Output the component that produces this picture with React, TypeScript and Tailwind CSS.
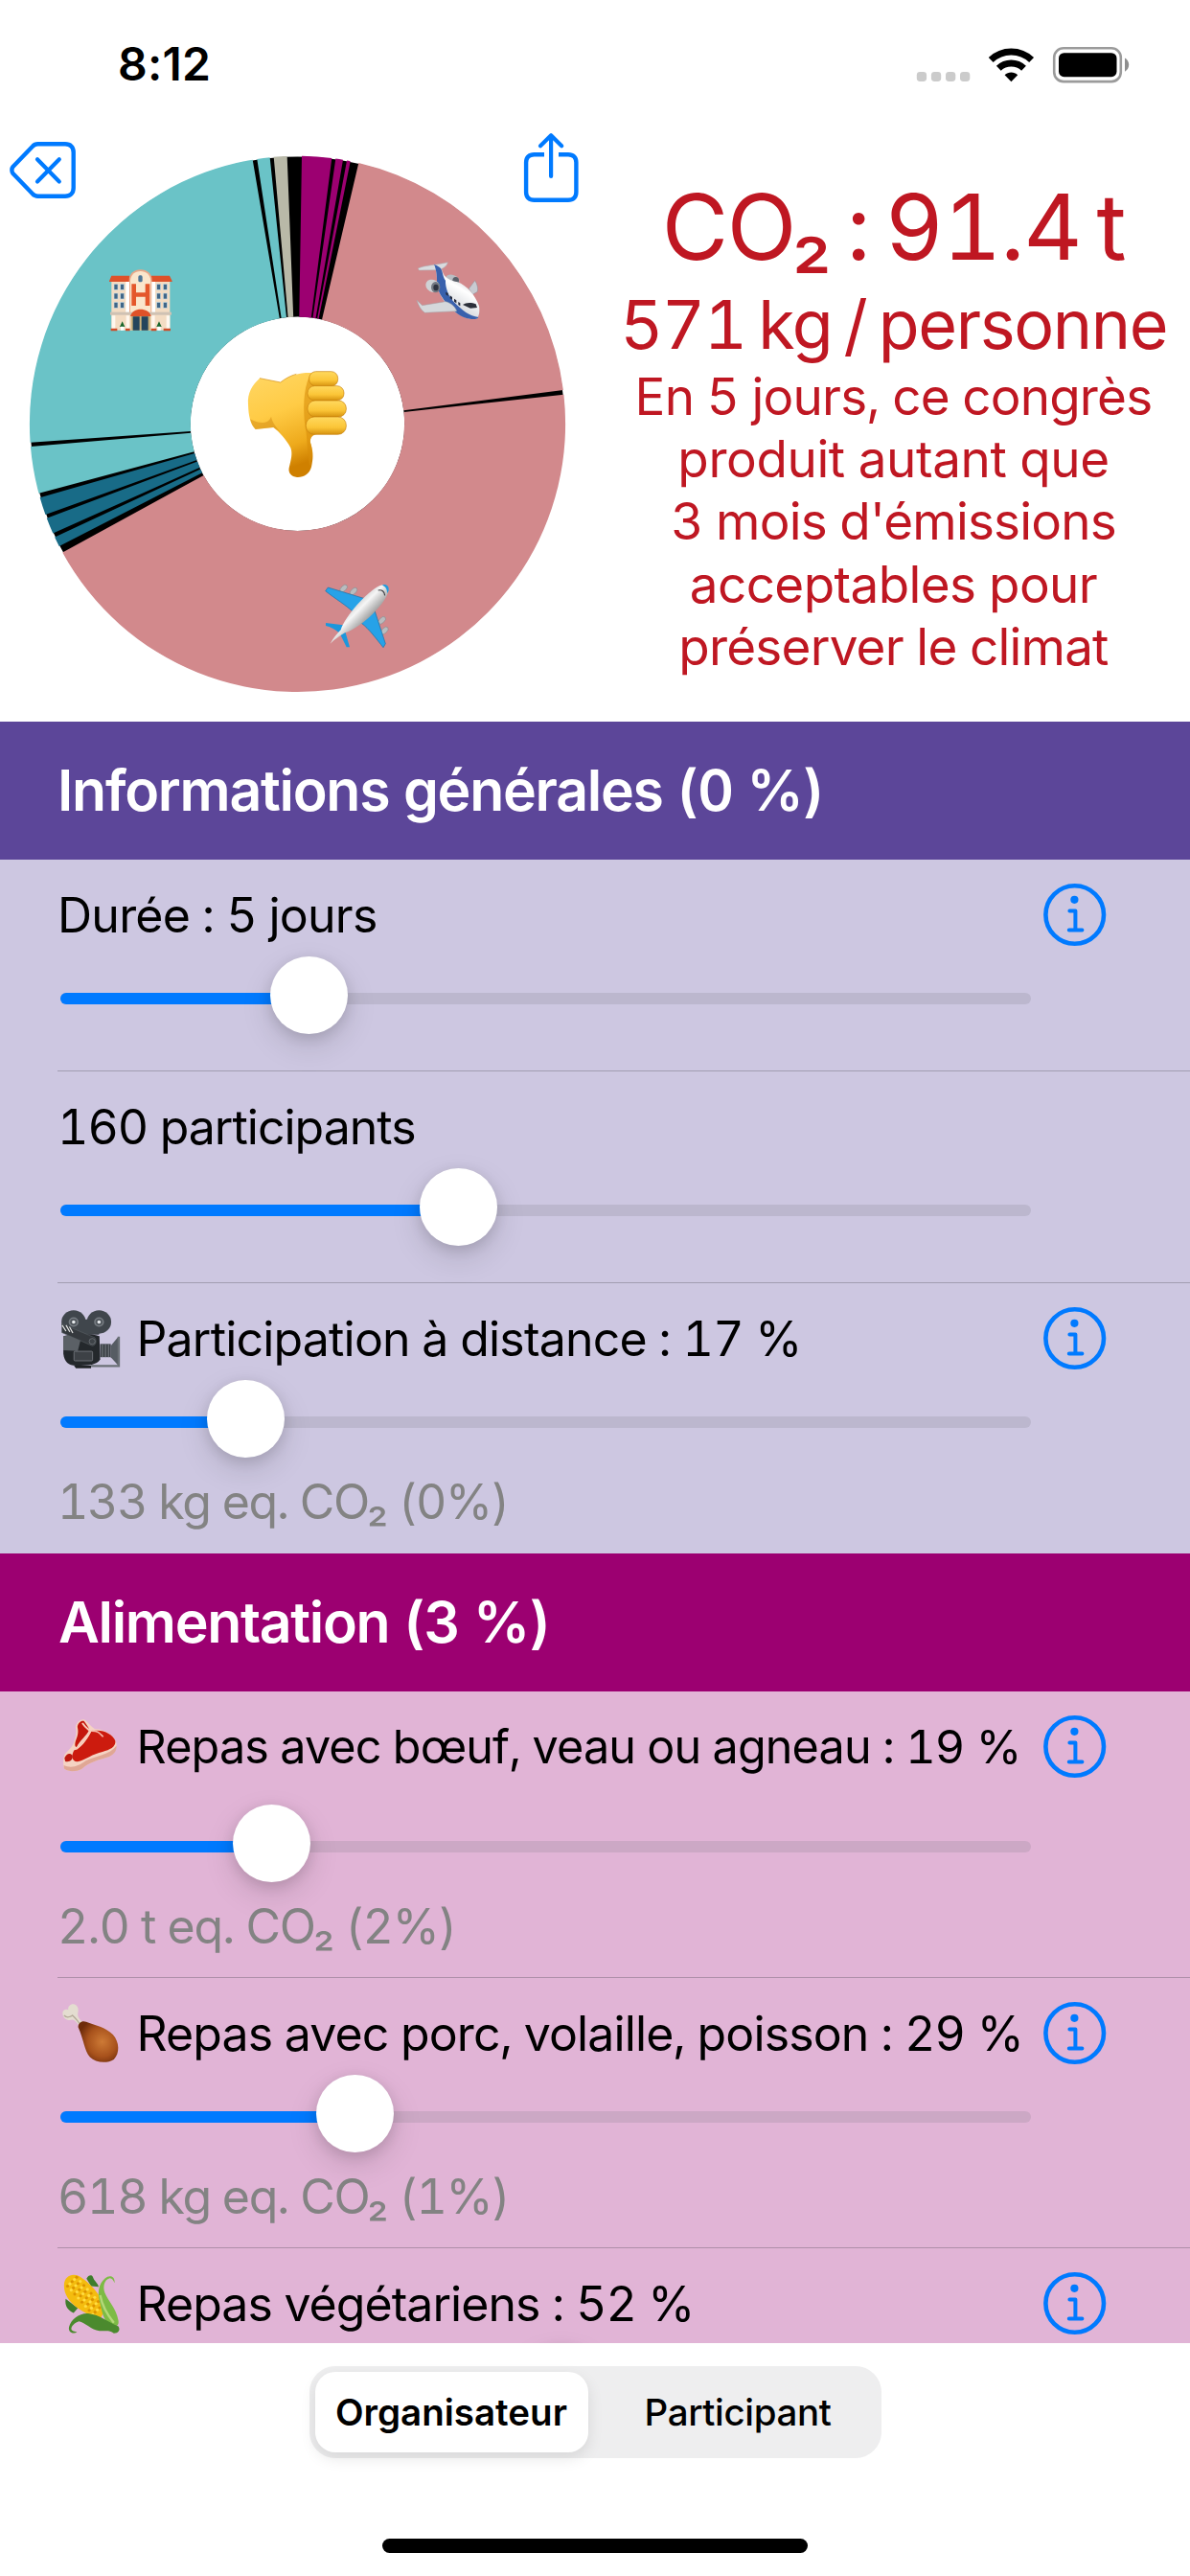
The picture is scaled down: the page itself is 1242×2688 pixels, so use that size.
const polar = (r: number, deg: number) => {
  const a = ((deg - 90) * Math.PI) / 180;
  return `${(310.5 + r * Math.cos(a)).toFixed(2)} ${(310.3 + r * Math.sin(a)).toFixed(2)}`;
};

const slicePath = (from: number, to: number) => {
  const large = to - from > 180 ? 1 : 0;
  return `M${polar(279.6, from)} A279.6 279.6 0 ${large} 1 ${polar(279.6, to)} L${polar(111.6, to)} A111.6 111.6 0 ${large} 0 ${polar(111.6, from)} Z`;
};

const slices = [
  { from: 0.92, to: 7.36, color: "#9c0071" },
  { from: 8.19, to: 9.78, color: "#9c0071" },
  { from: 10.62, to: 11.39, color: "#9c0071" },
  { from: 13.19, to: 82.74, color: "#d2898c" },
  { from: 83.71, to: 241.3, color: "#d2898c" },
  { from: 242.84, to: 245.0, color: "#186b87" },
  { from: 245.9, to: 249.4, color: "#186b87" },
  { from: 250.2, to: 254.04, color: "#186b87" },
  { from: 254.97, to: 265.13, color: "#6ac3c7" },
  { from: 266.0, to: 350.36, color: "#6ac3c7" },
  { from: 351.32, to: 354.08, color: "#6ac3c7" },
  { from: 354.91, to: 357.78, color: "#b9b9a8" },
];

function ThumbsDown() {
  return (
    <g>
      <path d="M663 404L728 417C758 393 790 386 826 387L846 400V575C824 582 818 594 824 612C832 640 830 658 825 682C819 705 800 715 780 714C762 713 752 700 755 685C761 660 767 640 760 622C745 593 725 573 706 558L650 564C634 548 628 522 627 486C624 450 640 425 663 404Z" fill="url(#skin)" />
      <path d="M706 558L650 564C641 555 636 545 633 532C660 546 690 550 699 524C702 545 720 562 734 580C728 572 715 563 706 558Z" fill="#c87a08" opacity=".4" />
      <path d="M818 400C800 440 798 500 806 560C812 580 812 640 820 680C826 650 830 640 824 612C818 594 824 582 846 578V400Z" fill="#d98e0a" opacity=".6" />
      <path d="M663 404L728 417C745 404 760 396 778 391" stroke="#d58f12" strokeWidth="3" fill="none" opacity=".7" />
      <rect x="818" y="383" width="90" height="46" rx="21" fill="url(#finger)" stroke="#c9820d" strokeWidth="2" />
      <rect x="813" y="428" width="114" height="46" rx="22" fill="url(#finger)" stroke="#c9820d" strokeWidth="2" />
      <rect x="813" y="474" width="121" height="51" rx="24" fill="url(#finger)" stroke="#c9820d" strokeWidth="2" />
      <rect x="808" y="525" width="126" height="55" rx="26" fill="url(#finger)" stroke="#c9820d" strokeWidth="2" />
    </g>
  );
}

function Hotel() {
  return (
    <g>
      <rect x="199" y="100" width="183" height="154" fill="#f3dcc3" />
      <path d="M192 100L199 83H256V102H192ZM389 100L381 83H324V102H389Z" fill="#de5129" />
      <path d="M254 205V98C254 76 270 64 290 64C310 64 326 76 326 98V205Z" fill="#e9a787" />
      <path d="M258 205V98C260 80 272 69 290 69C308 69 320 80 322 98V205Z" fill="#fae6cc" />
      <path d="M244 102H255V200H244ZM325 102H336V200H325Z" fill="#fff" />
      <path d="M262 109H276V136H305V109H319V177H305V149H276V177H262Z" fill="#e4572b" />
      <rect x="283" y="82" width="13" height="21" rx="5" fill="#4d7697" />
      {[109, 138, 166].map((y) =>
        [207, 227, 341, 361].map((x) => <rect key={`${x}-${y}`} x={x} y={y} width="12" height="18" fill="#3f6688" stroke="#c9dbe2" strokeWidth="2" />),
      )}
      <rect x="195" y="197" width="192" height="9" fill="#cfc2b4" />
      <path d="M258 210C262 194 276 188 290 188C304 188 320 194 323 210Z" fill="#df5228" />
      <rect x="260" y="210" width="61" height="44" fill="#cbb27c" />
      <path d="M266 211H287V254H266ZM293 211H314V254H293Z" fill="#24455c" />
      <path d="M200 208H211V250H200ZM245 208H255V250H245ZM325 208H335V250H325ZM371 208H382V250H371Z" fill="#fff7ee" />
      <path d="M225 243L233 226L241 243ZM340 243L348 226L356 243Z" fill="#17662b" />
      <path d="M228 242H238V254H228ZM343 242H353V254H343Z" fill="#fff" />
      <path d="M197 248H217V256H197ZM243 248H257V256H243ZM323 248H340V256H323ZM362 248H384V256H362Z" fill="#cf4c28" />
    </g>
  );
}

function Jet() {
  return (
    <g>
      <path d="M1159 60C1180 50 1215 50 1252 41C1250 52 1236 62 1224 65L1162 66Z" fill="#d9dcdf" stroke="#a9adb3" strokeWidth="1.5" />
      <path d="M1318 124L1337 98C1345 110 1347 122 1345 133L1330 142Z" fill="#c8cbd1" stroke="#8d9299" strokeWidth="1.5" />
      <ellipse cx="1267" cy="95" rx="22" ry="14" transform="rotate(20 1267 95)" fill="#b9bdc2" />
      <ellipse cx="1277" cy="98" rx="10" ry="11" fill="#5a5f68" />
      <path d="M1209 47C1220 52 1232 58 1235 68C1240 90 1262 98 1283 103C1310 113 1338 143 1350 178C1353 197 1350 214 1340 219C1320 220 1300 214 1280 200C1250 183 1225 145 1218 115C1219 90 1217 65 1209 47Z" fill="url(#fuselage)" />
      <path d="M1209 47C1220 52 1231 57 1234 68C1237 82 1240 92 1245 98C1244 120 1254 148 1274 168C1296 190 1320 210 1348 213C1345 221 1325 221 1302 213C1268 200 1226 150 1218 115C1219 90 1217 65 1209 47Z" fill="#3961ad" />
      <ellipse cx="1205" cy="115" rx="23" ry="19" transform="rotate(28 1205 115)" fill="#cfd2d5" />
      <ellipse cx="1214" cy="119" rx="14" ry="17" fill="#747982" />
      <ellipse cx="1215" cy="120" rx="8" ry="10" fill="#2e3340" />
      <path d="M1155 160L1172 176L1245 164C1262 168 1276 180 1280 194L1180 199C1167 190 1160 175 1155 160Z" fill="#d5d8db" stroke="#9da2a8" strokeWidth="1.5" />
      <path d="M1299 174C1308 166 1327 166 1340 172L1344 183L1323 185Z" fill="#2c303a" />
      <path d="M1246 134l7 4v9l-7-5zM1259 145l7 5v9l-7-5zM1272 155l7 5v9l-7-5zM1285 165l6 4v9l-6-4z" fill="#242a3c" />
    </g>
  );
}

function Airplane() {
  return (
    <g>
      {[[926, 1062], [957, 1071], [1046, 1162], [1054, 1194]].map(([x, y]) => (
        <ellipse key={x} cx={x} cy={y} rx="14" ry="8" transform={`rotate(-45 ${x} ${y})`} fill="#b9bcbf" stroke="#7e8286" strokeWidth="1.5" />
      ))}
      <path d="M869 1070L877 1059L1002 1097L957 1137C935 1115 900 1095 869 1070Z" fill="#26a2e8" stroke="#136fa8" strokeWidth="2" />
      <path d="M1022 1128L1057 1235L1050 1247C1030 1222 1005 1188 982 1171Z" fill="#26a2e8" stroke="#136fa8" strokeWidth="2" />
      <path d="M870 1170L925 1177L945 1246L935 1246L914 1203C900 1190 884 1182 870 1179Z" fill="#1c97dc" />
      <path d="M884 1235C895 1215 907 1203 917 1192C930 1150 1000 1070 1040 1053C1055 1047 1068 1054 1066 1070C1060 1105 990 1180 930 1201C915 1210 900 1220 884 1235Z" fill="url(#planeBody)" />
      <path d="M1051 1050C1062 1049 1069 1056 1067 1069L1063 1078C1062 1064 1058 1056 1046 1052Z" fill="#249bdc" />
      <path d="M1034 1068C1046 1065 1054 1072 1055 1084" stroke="#3a3d42" strokeWidth="3.5" fill="none" />
    </g>
  );
}

function Pie() {
  return (
    <svg viewBox="0 0 621 621" className="h-[621px] w-[621px]">
      <defs>
        <linearGradient id="skin" x1="0" y1="0" x2=".25" y2="1">
          <stop offset="0" stopColor="#ffd765" />
          <stop offset=".45" stopColor="#ffcb45" />
          <stop offset=".8" stopColor="#eeaa1c" />
          <stop offset="1" stopColor="#cf8000" />
        </linearGradient>
        <linearGradient id="finger" x1="0" y1="0" x2="0" y2="1">
          <stop offset="0" stopColor="#ffd95e" />
          <stop offset=".6" stopColor="#fbc537" />
          <stop offset="1" stopColor="#d6920f" />
        </linearGradient>
        <linearGradient id="fuselage" x1=".7" y1=".2" x2=".4" y2=".8">
          <stop offset="0" stopColor="#c2c6ca" />
          <stop offset=".4" stopColor="#ffffff" />
          <stop offset="1" stopColor="#d3d6da" />
        </linearGradient>
        <linearGradient id="planeBody" x1=".3" y1=".3" x2=".65" y2=".65">
          <stop offset="0" stopColor="#b5b5b5" />
          <stop offset=".45" stopColor="#f6f6f6" />
          <stop offset="1" stopColor="#8d8d8d" />
        </linearGradient>
      </defs>
      <circle cx="310.5" cy="310.3" r="195.3" fill="none" stroke="#000" strokeWidth="167" />
      {slices.map((s) => (
        <path key={s.from} d={slicePath(s.from, s.to)} fill={s.color} />
      ))}
      <g transform="translate(50 128) scale(.33333)">
        <Hotel />
        <Jet />
        <Airplane />
        <ThumbsDown />
      </g>
    </svg>
  );
}

function MovieCamera() {
  return (
    <>
      <circle cx="194" cy="103" r="32" fill="#40464c" />
      <circle cx="261" cy="103" r="32" fill="#40464c" />
      <path d="M194 96H261V138H210Z" fill="#40464c" />
      {[194, 261].map((x) => (
        <g key={x}>
          <circle cx={x} cy="103" r="13" fill="#777d83" />
          <circle cx={x} cy="103" r="9" fill="#50565c" />
          <circle cx={x} cy="103" r="4.5" fill="#e8ecee" />
        </g>
      ))}
      <path d="M167 142C195 134 240 134 262 142L264 205C255 220 235 222 200 222C180 222 170 212 167 190Z" fill="#24282c" />
      <path d="M167 142C185 138 205 138 215 141L205 182L167 180Z" fill="#6d7379" opacity=".75" />
      <path d="M195 222H240V229H200Z" fill="#1f2225" />
      <path d="M163 108L250 146C256 155 252 168 243 168L163 132Z" fill="#35393e" stroke="#5a6066" strokeWidth="1.5" />
      <path d="M164 112l10 16M174 112l10 18M183 116l9 17" stroke="#e8e8e8" strokeWidth="3" />
      <circle cx="243" cy="156" r="8" fill="#3e4348" stroke="#81878c" strokeWidth="1.5" />
      <path d="M264 163H292V199H264Z" fill="#3a3f45" />
      <path d="M292 168L312 143V222L292 199Z" fill="#565c63" />
      <path d="M270 164V199M278 164V199M286 164V199" stroke="#8b9197" strokeWidth="2" />
      <path d="M310 143H316V226H310ZM240 220H314V226H240Z" fill="#6b7177" />
      <rect x="195" y="183" width="49" height="26" rx="3" fill="#3d4146" stroke="#7b8086" strokeWidth="2" />
    </>
  );
}

function Steak() {
  return (
    <>
      <path d="M199 1207C203 1193 212 1185 222 1187C232 1195 240 1207 250 1213C275 1212 302 1230 307 1252C308 1270 300 1280 288 1288C262 1297 235 1302 215 1322C200 1330 180 1330 169 1321C166 1308 166 1295 170 1283C180 1270 192 1262 196 1245C200 1232 203 1220 199 1207Z" fill="#f5d3c3" />
      <path d="M307 1258C308 1272 300 1282 288 1288C262 1297 235 1302 215 1322C200 1330 180 1330 169 1321L168 1312C190 1322 210 1312 225 1300C250 1286 290 1284 307 1258Z" fill="#e0a795" />
      <path d="M204 1207C206 1195 214 1189 221 1191C226 1199 234 1207 235 1216C228 1232 210 1245 202 1262C195 1262 198 1248 202 1238C207 1224 206 1215 204 1207Z" fill="#c4160c" />
      <path d="M240 1220C262 1210 298 1224 304 1246C305 1262 290 1270 270 1275C245 1280 225 1297 204 1302C188 1301 188 1285 195 1271C212 1267 228 1244 240 1220Z" fill="#cc1b0e" />
      <path d="M170 1292C174 1280 185 1276 191 1285C193 1297 183 1304 172 1301Z" fill="#bd190f" />
      <path d="M217 1197C224 1208 232 1213 238 1219C230 1236 215 1255 200 1268" stroke="#f8cbb9" strokeWidth="5" fill="none" />
      <path d="M242 1218C258 1218 262 1224 272 1234" stroke="#f6bbaa" strokeWidth="4" fill="none" />
    </>
  );
}

function Drumstick() {
  return (
    <>
      <path d="M165 448C164 438 172 434 180 437C178 427 187 420 196 422C206 425 208 437 205 447C204 456 210 464 218 470L209 480C202 472 196 463 190 464C178 468 166 460 165 448Z" fill="#e4ddd0" />
      <path d="M169 452C176 460 186 456 191 452C198 458 203 466 210 474" stroke="#b5aa99" strokeWidth="3.5" fill="none" />
      <path d="M206 484C206 473 216 465 227 470C250 479 278 484 298 505C315 525 316 556 300 572C283 584 252 582 237 566C222 548 220 515 206 484Z" fill="url(#roast)" />
    </>
  );
}

function Corn() {
  return (
    <>
      <path d="M228 1170C233 1160 242 1158 245 1166C248 1176 258 1182 260 1192L240 1190ZM173 1225C170 1245 180 1258 194 1263L205 1250Z" fill="#3f7d2c" />
      <path d="M169 1185C170 1164 190 1153 208 1163C235 1180 270 1215 276 1255L266 1277C225 1270 165 1235 169 1185Z" fill="#f4bc0f" />
      {[0, 1, 2, 3, 4, 5, 6, 7].map((i) =>
        [-2, -1, 0, 1, 2].map((j) => (
          <circle key={`${i}${j}`} cx={190 + i * 9.5 - j * 6} cy={1178 + i * 11 + j * 6} r="4" fill={(i + j) % 2 ? "#ffdc43" : "#dc9300"} />
        )),
      )}
      <path d="M302 1182C303 1166 294 1160 283 1165C265 1175 255 1200 262 1230C268 1255 270 1275 284 1292C298 1304 315 1303 312 1284C306 1250 285 1232 276 1208C270 1190 276 1172 288 1169C296 1168 298 1174 302 1182Z" fill="#7dbb45" />
      <path d="M264 1215C270 1248 284 1270 300 1290" stroke="#b4d879" strokeWidth="6" fill="none" />
      <path d="M203 1316C190 1322 179 1314 182 1301C188 1280 210 1262 235 1265C262 1268 280 1285 312 1300C318 1310 312 1319 300 1319C288 1308 275 1314 262 1312C240 1309 225 1290 208 1286C196 1290 187 1300 188 1308C190 1314 197 1314 203 1316Z" fill="#4b8a2e" />
    </>
  );
}

const glyphs = {
  camera: { top: 65.3, art: <MovieCamera /> },
  steak: { top: 1178.5, art: <Steak /> },
  chicken: { top: 418.1, art: <Drumstick /> },
  corn: { top: 1154.9, art: <Corn /> },
};

function RowEmoji({ name }: { name: keyof typeof glyphs }) {
  const { top, art } = glyphs[name];
  return (
    <svg viewBox={`151.5 ${top} 166.65 167.2`} preserveAspectRatio="none" className="mr-[16.5px] h-[64px] w-[66px] shrink-0">
      <defs>
        <radialGradient id="roast" cx=".6" cy=".5" r=".6">
          <stop offset="0" stopColor="#cd7a36" />
          <stop offset=".6" stopColor="#a8521c" />
          <stop offset="1" stopColor="#6f2c0b" />
        </radialGradient>
      </defs>
      {art}
    </svg>
  );
}

function InfoButton() {
  return (
    <button className="absolute top-[24px] left-[1088px] h-[68px] w-[68px]">
      <svg viewBox="0 0 68 68" fill="none" stroke="#007aff" strokeLinecap="round" strokeLinejoin="round">
        <circle cx="33.7" cy="33.5" r="30.3" strokeWidth="4.6" />
        <circle cx="33.4" cy="17.8" r="4.1" fill="#007aff" stroke="none" />
        <path d="M28.4 29.6H34.4V49.6M27.8 49.6H41.4" strokeWidth="4" />
      </svg>
    </button>
  );
}

function Slider({ thumb }: { thumb: number }) {
  return (
    <div className="relative ml-[63px] h-[81px] w-[1013px]">
      <div className="absolute top-[38px] h-[12px] w-full rounded-full bg-[#787880]/20" />
      <div className="absolute top-[38px] h-[12px] rounded-full bg-[#007aff]" style={{ width: thumb - 63 }} />
      <div
        className="absolute top-0 size-[81px] rounded-full bg-white shadow-[0_12px_32px_rgba(0,0,0,0.13),0_4px_14px_rgba(0,0,0,0.12)]"
        style={{ left: thumb - 103.5 }}
      />
    </div>
  );
}

type RowProps = {
  label: string;
  labelClass: string;
  thumb: number;
  height: string;
  sliderGap?: string;
  emoji?: keyof typeof glyphs;
  info?: boolean;
  note?: string;
  noteClass?: string;
};

function Row({ label, labelClass, thumb, height, sliderGap = "mt-[13px]", emoji, info = true, note, noteClass = "" }: RowProps) {
  return (
    <div className={`relative ${height}`}>
      <div className="flex h-[88px] items-center pt-[28px] pl-[60px]">
        {emoji && <RowEmoji name={emoji} />}
        <span className={`leading-[60px] whitespace-nowrap text-black ${labelClass}`}>{label}</span>
      </div>
      {info && <InfoButton />}
      <div className={sliderGap}>
        <Slider thumb={thumb} />
      </div>
      {note && <p className={`mt-[16px] pl-[60px] text-[50px] leading-[60px] whitespace-nowrap text-[#838383] ${noteClass}`}>{note}</p>}
    </div>
  );
}

const Separator = () => <div className="ml-[60px] h-px bg-[#3c3c43]/30" />;

export default function App() {
  return (
    <div className="flex h-[2688px] w-[1242px] flex-col overflow-hidden bg-white font-['Inter',sans-serif] tabular-nums">
      <div className="flex h-[132px] shrink-0 items-start justify-between pt-[37px] pr-[52px] pl-[123px]">
        <span className="text-[48px] leading-[60px] font-semibold tracking-[0.26px] proportional-nums">8:12</span>
        <svg viewBox="950 40 240 60" className="mt-[3px] h-[60px] w-[240px]">
          {[956.8, 971.9, 987, 1002].map((x) => (
            <rect key={x} x={x} y="75" width="10.3" height="10" rx="3.4" fill="#cbcbcb" />
          ))}
          <path d="M1055.4 85.2L1048.6 78.2C1052.4 74.6 1058.4 74.6 1062.2 78.2Z" />
          <path d="M1042.3 71.2C1049.6 64.3 1061.2 64.3 1068.5 71.2" fill="none" stroke="#000" strokeWidth="7" />
          <path d="M1034.2 62.6C1046 51.2 1064.8 51.2 1076.6 62.6" fill="none" stroke="#000" strokeWidth="7" />
          <rect x="1100.2" y="50.3" width="69.6" height="34.8" rx="9.8" fill="none" stroke="#9b9b9b" strokeWidth="2.6" />
          <rect x="1105" y="55.2" width="60.5" height="25" rx="5.5" />
          <path d="M1174 60.5C1176.6 61.8 1178.2 64.6 1178.2 67.6S1176.6 73.4 1174 74.7Z" fill="#8e8e8e" />
        </svg>
      </div>

      <div className="relative flex h-[621px] shrink-0">
        <Pie />
        <button className="absolute top-[12px] left-[6px]">
          <svg viewBox="6 144 78 68" className="h-[68px] w-[78px]" fill="none" stroke="#007aff" strokeLinecap="round" strokeLinejoin="round">
            <path d="M39.5 150.3H68C73.5 150.3 76.7 153.4 76.7 159V196C76.7 201.5 73.5 204.7 68 204.7H39.5C37 204.7 35.5 204 34 202.3L13.5 181C12 179.2 12 175.8 13.5 174L34 152.7C35.5 151 37 150.3 39.5 150.3Z" strokeWidth="4.4" />
            <path d="M39 166.3L61.8 189.5M61.8 166.3L39 189.5" strokeWidth="4.2" />
          </svg>
        </button>
        <button className="absolute top-[4px] left-[542px]">
          <svg viewBox="542 136 66 80" className="h-[80px] w-[66px]" fill="none" stroke="#007aff" strokeLinecap="round" strokeLinejoin="round">
            <path d="M568 161.2H557.5C552.2 161.2 549.1 164.2 549.1 169.5V200.5C549.1 205.8 552.2 208.8 557.5 208.8H593C598.3 208.8 601.4 205.8 601.4 200.5V169.5C601.4 164.2 598.3 161.2 593 161.2H583" strokeWidth="4.4" strokeLinecap="butt" />
            <path d="M575.1 184V142.5M564 152.3L575.1 141.2L586.2 152.3" strokeWidth="4.2" />
          </svg>
        </button>
        <div className="flex flex-1 flex-col items-center pt-[49px] pl-[2px] whitespace-nowrap text-[#bf1722]">
          <div className="h-[112px] text-[95px] leading-[111px] tracking-[-1.35px] [word-spacing:-8px]">CO₂ : 91.4 t</div>
          <div className="h-[89px] text-[70px] leading-[91px] tracking-[-1.4px] [word-spacing:-5px]">571 kg / personne</div>
          <div className="flex flex-col items-center text-[53px] leading-[65.2px]">
            <span className="tracking-[-0.81px]">En 5 jours, ce congrès</span>
            <span className="tracking-[-0.4px]">produit autant que</span>
            <span className="tracking-[-0.82px]">3 mois d'émissions</span>
            <span className="tracking-[-0.6px]">acceptables pour</span>
            <span className="tracking-[-0.79px]">préserver le climat</span>
          </div>
        </div>
      </div>

      <div className="h-[1692px] shrink-0 overflow-hidden">
        <h2 className="h-[144px] bg-[#5c4699] pl-[60px] text-[59px] leading-[144px] font-semibold tracking-[-1.27px] text-white">Informations générales (0 %)</h2>
        <div className="bg-[#cdc7e1]">
          <Row label="Durée : 5 jours" labelClass="text-[50px] tracking-[-0.76px]" thumb={322.6} height="h-[220px]" />
          <Separator />
          <Row label="160 participants" labelClass="text-[50px] tracking-[-1px]" thumb={478.5} height="h-[220px]" info={false} />
          <Separator />
          <Row label="Participation à distance : 17 %" labelClass="text-[50px] tracking-[-0.82px]" thumb={256.4} height="h-[282px]" emoji="camera" note="133 kg eq. CO₂ (0%)" noteClass="tracking-[-1.35px]" />
        </div>
        <h2 className="h-[144px] bg-[#9c0071] pl-[61px] text-[59px] leading-[144px] font-semibold tracking-[-1.32px] text-white">Alimentation (3 %)</h2>
        <div className="bg-[#e1b4d6]">
          <Row label="Repas avec bœuf, veau ou agneau : 19 %" labelClass="text-[48.5px] tracking-[-0.85px]" thumb={283.6} height="h-[298px]" sliderGap="mt-[30px]" emoji="steak" note="2.0 t eq. CO₂ (2%)" noteClass="tracking-[-1.16px]" />
          <Separator />
          <Row label="Repas avec porc, volaille, poisson : 29 %" labelClass="text-[50px] tracking-[-0.88px]" thumb={370.5} height="h-[281px]" emoji="chicken" note="618 kg eq. CO₂ (1%)" noteClass="tracking-[-1.32px]" />
          <Separator />
          <Row label="Repas végétariens : 52 %" labelClass="text-[50px] tracking-[-0.95px]" thumb={585} height="h-[281px]" emoji="corn" />
        </div>
      </div>

      <div className="mx-auto mt-[24px] flex h-[96px] w-[597px] shrink-0 rounded-[27px] bg-[#eeeeef] p-[6px] text-[38.5px] leading-[84px] text-black">
        <div className="w-[285px] rounded-[21px] bg-white text-center font-semibold shadow-[0_6px_16px_rgba(0,0,0,0.1)]">Organisateur</div>
        <div className="flex-1 pl-[13px] text-center font-medium tracking-[-0.36px]">Participant</div>
      </div>
      <div className="mx-auto mt-[84px] h-[15px] w-[444px] shrink-0 rounded-full bg-black" />
    </div>
  );
}
